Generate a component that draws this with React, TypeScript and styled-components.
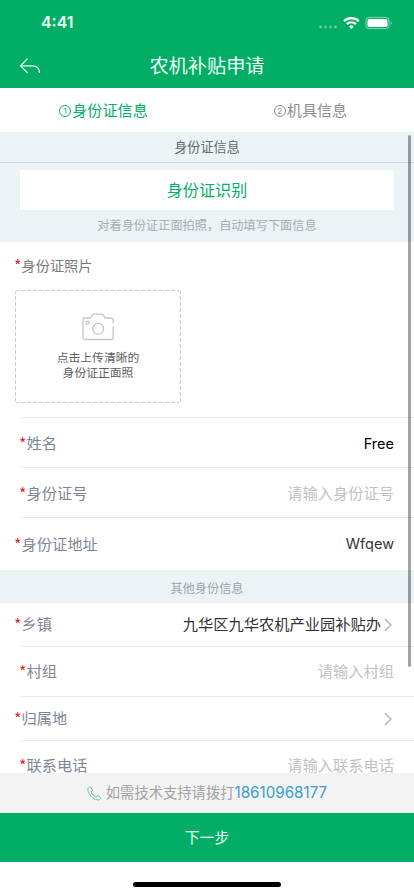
import React from "react";
import styled, { createGlobalStyle } from "styled-components";

const GREEN = "#02ae66";

const GlobalStyle = createGlobalStyle`
  * { box-sizing: border-box; }
  body { margin: 0; background: #fff; }
`;

const Screen = styled.div`
  position: relative;
  display: flex;
  flex-direction: column;
  width: 414px;
  height: 896px;
  overflow: hidden;
  background: #fff;
  font-family: Inter, "Noto Sans CJK SC", sans-serif;
  font-size: 15.25px;
  line-height: 20px;
  white-space: nowrap;
`;

const Header = styled.header`
  flex: none;
  height: 88px;
  background: ${GREEN};
  color: #ecfff6;
`;

const StatusBar = styled.div`
  display: flex;
  align-items: center;
  justify-content: space-between;
  height: 44px;
  padding: 2px 21px 0 41px;
`;

const Clock = styled.span`
  font-size: 15.9px;
  font-weight: 600;
`;

const NavBar = styled.div`
  display: grid;
  grid-template-columns: 60px 1fr 60px;
  align-items: center;
  height: 44px;
`;

const BackButton = styled.button`
  display: flex;
  padding: 0 0 0 19px;
  border: 0;
  background: none;
  color: inherit;
`;

const Title = styled.h1`
  margin: 0;
  font-size: 19.2px;
  font-weight: 400;
  line-height: 28px;
  text-align: center;
`;

const Tabs = styled.nav`
  display: grid;
  grid-template-columns: 1fr 1fr;
  flex: none;
  height: 44px;
  padding-top: 2px;
`;

const Tab = styled.div<{ $active?: boolean }>`
  display: flex;
  align-items: center;
  justify-content: center;
  gap: 1px;
  color: ${(p) => (p.$active ? GREEN : "#8e8e8e")};
  font-size: 15.1px;
`;

const StepNumber = styled.span`
  display: flex;
  align-items: center;
  justify-content: center;
  width: 12px;
  height: 12px;
  border: 1px solid currentColor;
  border-radius: 50%;
  font-size: 8px;
  line-height: 10px;
`;

const Content = styled.main`
  flex: 1;
  min-height: 0;
  overflow: hidden;
`;

const SectionHeading = styled.div<{ $height: number; $muted?: boolean }>`
  display: flex;
  align-items: center;
  justify-content: center;
  height: ${(p) => p.$height}px;
  padding-top: ${(p) => (p.$muted ? 5 : 0)}px;
  border-bottom: 1px solid ${(p) => (p.$muted ? "#ebf3f5" : "#cdd7d9")};
  background: #ebf3f5;
  color: ${(p) => (p.$muted ? "#a0a5a7" : "#66696c")};
  font-size: ${(p) => (p.$muted ? 12.2 : 13.1)}px;
`;

const ScanPanel = styled.section`
  display: flex;
  flex-direction: column;
  height: 79px;
  padding: 7px 20px 0;
  background: #ebf3f5;
`;

const ScanButton = styled.button`
  height: 40px;
  padding: 0;
  border: 0;
  background: #fff;
  color: ${GREEN};
  font: inherit;
  font-size: 16.1px;
`;

const Hint = styled.p`
  margin: 6px 0 0;
  color: #a9adae;
  font-size: 12.2px;
  text-align: center;
`;

const PhotoField = styled.section`
  height: 175px;
  padding: 14px 15px 0;
  color: #77797c;
  font-size: 14.2px;
`;

const FieldLabel = styled.span`
  display: flex;
  color: inherit;
`;

const Required = styled.span`
  width: 6.5px;
  color: #e0281e;
  font-family: "Noto Sans CJK SC", sans-serif;
  font-size: 16px;
  line-height: 19px;
  text-indent: -1px;
`;

const UploadBox = styled.div`
  display: flex;
  flex-direction: column;
  align-items: center;
  width: 166px;
  height: 113px;
  margin-top: 14px;
  padding-top: 23px;
  border-radius: 3px;
  color: #5e5e5e;
  font-size: 11.8px;
  line-height: 15px;
  text-align: center;
  background-image:
    repeating-linear-gradient(90deg, #cacaca 0 4px, transparent 4px 6px),
    repeating-linear-gradient(90deg, #cacaca 0 4px, transparent 4px 6px),
    repeating-linear-gradient(#cacaca 0 4px, transparent 4px 6px),
    repeating-linear-gradient(#cacaca 0 4px, transparent 4px 6px);
  background-position: top, bottom, left, right;
  background-size: 100% 1px, 100% 1px, 1px 100%, 1px 100%;
  background-repeat: no-repeat;
`;

const UploadText = styled.span`
  margin-top: 10px;
`;

const Row = styled.div<{ $height: number; $indent?: boolean; $noLine?: boolean; $shift?: number }>`
  display: flex;
  align-items: center;
  justify-content: space-between;
  height: ${(p) => p.$height}px;
  padding: ${(p) => p.$shift ?? 2}px 20px 0 ${(p) => (p.$indent ? 20 : 15)}px;
  background: ${(p) =>
    p.$noLine ? "none" : "linear-gradient(#e9e9ea, #e9e9ea) 20px 0 / 100% 1px no-repeat"};
  color: #7d8794;
`;

const Value = styled.span<{ $tone: "black" | "dark" | "placeholder" }>`
  display: flex;
  align-items: center;
  color: ${(p) => ({ black: "#000", dark: "#333", placeholder: "#c1c1c4" })[p.$tone]};
`;

const Latin = styled.span<{ $raised?: boolean }>`
  padding-bottom: ${(p) => (p.$raised ? 2 : 0)}px;
  font-size: 14.5px;
  line-height: 18px;
`;

const SupportBar = styled.div`
  display: flex;
  align-items: center;
  justify-content: center;
  flex: none;
  height: 40px;
  background: #f3f3f3;
  color: #a2a2a2;
  font-size: 14.3px;
`;

const SupportText = styled.span`
  margin-left: 4px;
`;

const PhoneNumber = styled.a`
  color: #3a9fcb;
  font-size: 15.2px;
`;

const NextButton = styled.button`
  flex: none;
  height: 49px;
  padding: 0;
  border: 0;
  background: ${GREEN};
  color: #ecfff6;
  font: inherit;
  font-size: 14.8px;
`;

const HomeArea = styled.footer`
  display: flex;
  justify-content: center;
  flex: none;
  height: 34px;
  padding-top: 20px;
`;

const HomeIndicator = styled.div`
  width: 148px;
  height: 5px;
  border-radius: 3px;
  background: #000;
`;

const ScrollThumb = styled.div`
  position: absolute;
  top: 135px;
  right: 3px;
  width: 3px;
  height: 532px;
  border-radius: 2px;
  background: rgba(0, 0, 0, 0.36);
`;

const StatusIcons = () => (
  <svg width="76" height="18" viewBox="0 0 76 18" fill="none">
    <g fill="#fff" opacity="0.4">
      <circle cx="3.5" cy="13" r="1.4" />
      <circle cx="8.5" cy="13" r="1.4" />
      <circle cx="13.5" cy="13" r="1.4" />
      <circle cx="18.5" cy="13" r="1.4" />
    </g>
    <g stroke="#fff" strokeWidth="2.2">
      <path d="M27 7.2a10.6 10.6 0 0 1 14.8 0" />
      <path d="M29.8 10.1a6.6 6.6 0 0 1 9.2 0" />
    </g>
    <path d="M34.4 15l-2.4-2.5a3.4 3.4 0 0 1 4.8 0z" fill="#fff" />
    <rect x="49" y="3.4" width="23" height="11.2" rx="3" stroke="#fff" strokeOpacity="0.5" />
    <rect x="50.5" y="4.9" width="20" height="8.2" rx="1.8" fill="#fff" />
    <path d="M73.6 7.2c1.4.5 1.4 3.1 0 3.6z" fill="#fff" opacity="0.6" />
  </svg>
);

const BackIcon = () => (
  <svg width="22" height="18" viewBox="0 0 22 18" fill="none" stroke="currentColor" strokeWidth="1.2">
    <path d="M8.5 1.7L1.5 8.8l7 7" />
    <path d="M1.8 8.8h11.7c4.3 0 7 2.3 7 7.2" />
  </svg>
);

const CameraIcon = () => (
  <svg width="32" height="28" viewBox="0 0 32 28" fill="none" stroke="#c5c5c5" strokeWidth="1.3">
    <path d="M31.2 13.5V24.5a2 2 0 0 1-2 2H3a2 2 0 0 1-2-2V7a2 2 0 0 1 2-2h5.5l1.5-2.6c.5-.9 1-1.3 2-1.3h7.5c1 0 1.5.4 2 1.3L23 5h6.2a2 2 0 0 1 2 2v3" />
    <circle cx="16.2" cy="15.8" r="5.4" />
    <circle cx="5.7" cy="9.7" r="1.5" />
  </svg>
);

const ChevronIcon = () => (
  <svg width="13" height="14" viewBox="0 0 13 14" fill="none" stroke="#bcbcc0" strokeWidth="1.7">
    <path d="M4 1.2L9.8 7 4 12.8" />
  </svg>
);

const PhoneIcon = () => (
  <svg width="15" height="15" viewBox="0 0 15 15" fill="none" stroke="#57bd91" strokeWidth="0.9">
    <path d="M2.1 1.3C1 2.1.6 3.1.9 4.3c1.1 4.5 4.7 8.4 9.4 9.6 1.2.3 2.3-.1 3.2-1.2.4-.5.3-1-.2-1.4l-2.1-1.4c-.5-.3-1-.2-1.4.3l-.7.8C6.9 10.1 5 8.2 4.1 5.7l.8-.6c.5-.4.6-.9.3-1.4L3.8 1.5c-.4-.6-1-.7-1.7-.2z" />
  </svg>
);

const Label = ({ children }: { children: React.ReactNode }) => (
  <FieldLabel>
    <Required>*</Required>
    {children}
  </FieldLabel>
);

export default function App() {
  return (
    <Screen>
      <GlobalStyle />
      <Header>
        <StatusBar>
          <Clock>4:41</Clock>
          <StatusIcons />
        </StatusBar>
        <NavBar>
          <BackButton aria-label="返回">
            <BackIcon />
          </BackButton>
          <Title>农机补贴申请</Title>
        </NavBar>
      </Header>
      <Tabs>
        <Tab $active>
          <StepNumber>1</StepNumber>身份证信息
        </Tab>
        <Tab>
          <StepNumber>2</StepNumber>机具信息
        </Tab>
      </Tabs>
      <Content>
        <SectionHeading $height={31}>身份证信息</SectionHeading>
        <ScanPanel>
          <ScanButton>身份证识别</ScanButton>
          <Hint>对着身份证正面拍照，自动填写下面信息</Hint>
        </ScanPanel>
        <PhotoField>
          <Label>身份证照片</Label>
          <UploadBox>
            <CameraIcon />
            <UploadText>
              点击上传清晰的
              <br />
              身份证正面照
            </UploadText>
          </UploadBox>
        </PhotoField>
        <Row $height={50} $indent $shift={3}>
          <Label>姓名</Label>
          <Value $tone="black">
            <Latin>Free</Latin>
          </Value>
        </Row>
        <Row $height={50} $indent $shift={3}>
          <Label>身份证号</Label>
          <Value $tone="placeholder">请输入身份证号</Value>
        </Row>
        <Row $height={53}>
          <Label>身份证地址</Label>
          <Value $tone="dark">
            <Latin $raised>Wfqew</Latin>
          </Value>
        </Row>
        <SectionHeading $height={33} $muted>
          其他身份信息
        </SectionHeading>
        <Row $height={43} $noLine $shift={0}>
          <Label>乡镇</Label>
          <Value $tone="dark">
            九华区九华农机产业园补贴办
            <ChevronIcon />
          </Value>
        </Row>
        <Row $height={50} $indent>
          <Label>村组</Label>
          <Value $tone="placeholder">请输入村组</Value>
        </Row>
        <Row $height={44}>
          <Label>归属地</Label>
          <ChevronIcon />
        </Row>
        <Row $height={50} $indent $shift={1}>
          <Label>联系电话</Label>
          <Value $tone="placeholder">请输入联系电话</Value>
        </Row>
      </Content>
      <SupportBar>
        <PhoneIcon />
        <SupportText>如需技术支持请拨打</SupportText>
        <PhoneNumber>18610968177</PhoneNumber>
      </SupportBar>
      <NextButton>下一步</NextButton>
      <HomeArea>
        <HomeIndicator />
      </HomeArea>
      <ScrollThumb />
    </Screen>
  );
}
